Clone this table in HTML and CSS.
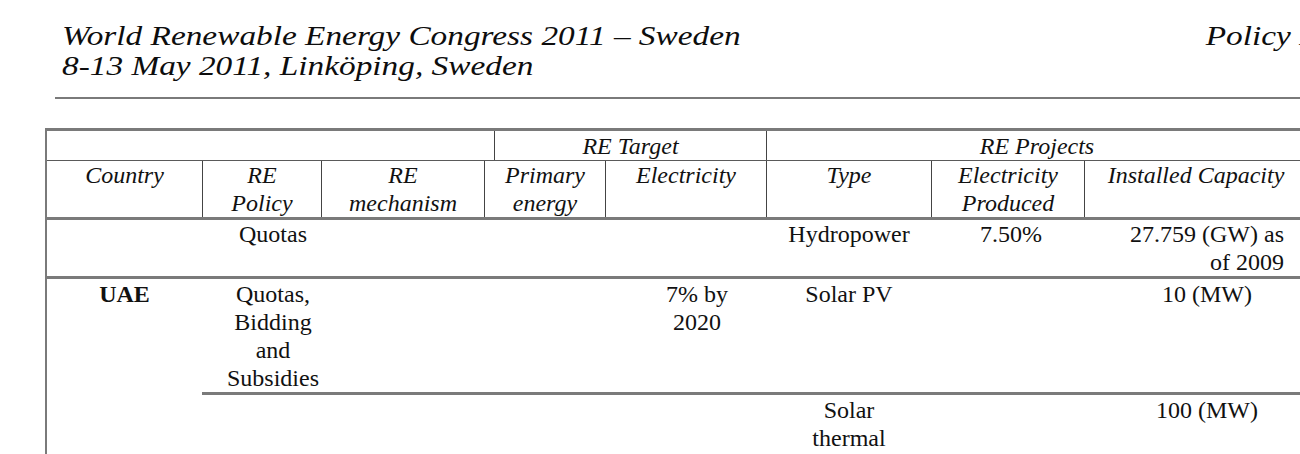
FILE: index.html
```html
<!DOCTYPE html>
<html lang="en">
<head>
<meta charset="utf-8">
<title>World Renewable Energy Congress 2011 – Policy table</title>
<link rel="stylesheet" href="styles.css">
</head>
<body>
<header class="running-head">
  <div class="head-text">
    <div class="head-line"><span>World Renewable Energy Congress 2011 – Sweden</span><span>Policy Issues</span></div>
    <div class="head-line"><span>8-13 May 2011, Linköping, Sweden</span></div>
  </div>
</header>

<div class="re-table">
  <div class="group-row">
    <div class="cell"></div>
    <div class="cell ruled">RE Target</div>
    <div class="cell ruled">RE Projects</div>
  </div>
  <div class="head-row">
    <div class="cell">Country</div>
    <div class="cell ruled">RE<br>Policy</div>
    <div class="cell ruled">RE<br>mechanism</div>
    <div class="cell ruled">Primary<br>energy</div>
    <div class="cell ruled">Electricity</div>
    <div class="cell ruled">Type</div>
    <div class="cell ruled">Electricity<br>Produced</div>
    <div class="cell ruled">Installed Capacity</div>
  </div>
  <div class="data-row">
    <div class="cell"></div>
    <div class="cell">Quotas</div>
    <div class="cell"></div>
    <div class="cell"></div>
    <div class="cell"></div>
    <div class="cell">Hydropower</div>
    <div class="cell">7.50%</div>
    <div class="cell"><span class="cap-block"><span class="cap-line">27.759 (GW) as</span><span class="cap-line right">of 2009</span></span></div>
  </div>
  <div class="data-block">
    <div class="cell country">UAE</div>
    <div class="cell upper">Quotas,<br>Bidding<br>and<br>Subsidies</div>
    <div class="cell upper"></div>
    <div class="cell upper"></div>
    <div class="cell upper">7% by<br>2020</div>
    <div class="cell upper">Solar PV</div>
    <div class="cell upper"></div>
    <div class="cell upper">10 (MW)</div>
    <div class="cell lower"></div>
    <div class="cell lower"></div>
    <div class="cell lower"></div>
    <div class="cell lower"></div>
    <div class="cell lower">Solar<br>thermal</div>
    <div class="cell lower"></div>
    <div class="cell lower">100 (MW)</div>
  </div>
</div>
</body>
</html>
```

FILE: styles.css
```css
html, body {
  margin: 0;
  padding: 0;
  background: #ffffff;
  overflow: hidden;
}

body {
  font-family: "Liberation Serif", "Times New Roman", serif;
  color: #111111;
}

/* running head */
.running-head {
  margin-left: 55px;
  padding-top: 21px;
  padding-bottom: 16px;
  border-bottom: 2px solid #7a7a7a;
}

.head-text {
  margin-left: 7px;
  width: 1108px;
  font-style: italic;
  font-size: 28px;
  line-height: 30px;
  color: #0d0d0d;
  transform: scaleX(1.19);
  transform-origin: 0 0;
}

.head-line {
  display: flex;
  justify-content: space-between;
  white-space: nowrap;
}

/* table */
.re-table {
  margin: 29px 0 0 45px;
  width: 1290px;
  border-left: 2px solid #7a7a7a;
  border-top: 3px solid #7a7a7a;
  font-size: 24px;
  line-height: 28px;
}

.cell {
  box-sizing: border-box;
  text-align: center;
  white-space: nowrap;
}

.ruled {
  border-left: 1px solid #444444;
}

.group-row {
  display: grid;
  grid-template-columns: 447px 272px 541px;
  border-bottom: 1px solid #5a5a5a;
  font-style: italic;
}

.group-row .cell {
  padding-top: 1px;
  height: 29px;
}

.head-row {
  display: grid;
  grid-template-columns: 155px 119px 163px 121px 161px 165px 153px 223px;
  border-bottom: 3px solid #7a7a7a;
  font-style: italic;
}

.head-row .cell {
  height: 56px;
}

.data-row {
  display: grid;
  grid-template-columns: 155px 142px 141px 142px 140px 164px 160px 232px;
  border-bottom: 3px solid #7a7a7a;
}

.data-row .cell {
  height: 56px;
}

.cap-block {
  display: inline-flex;
  flex-direction: column;
}

.cap-line.right {
  text-align: right;
}

.data-block {
  display: grid;
  grid-template-columns: 155px 142px 141px 142px 140px 164px 160px 232px;
  grid-template-rows: 116px 70px;
}

.country {
  grid-row: 1 / span 2;
  font-weight: bold;
  padding-top: 1px;
}

.upper {
  padding-top: 1px;
  border-bottom: 3px solid #7a7a7a;
}

.lower {
  padding-top: 1px;
}
```
